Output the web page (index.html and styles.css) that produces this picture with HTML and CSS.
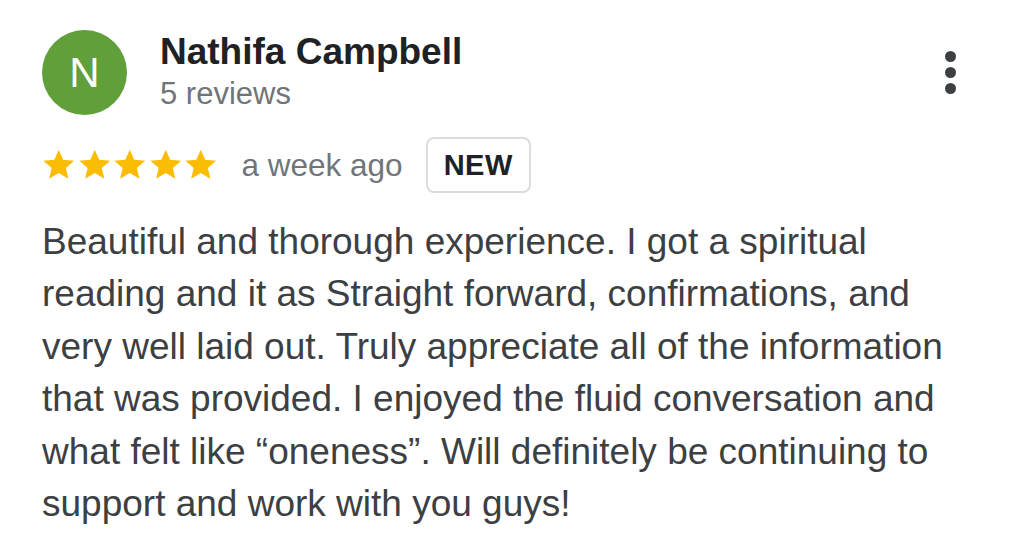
FILE: index.html
```html
<!DOCTYPE html>
<html>
<head>
<meta charset="utf-8">
<link rel="stylesheet" href="styles.css">
</head>
<body>
<div class="review">
  <div class="header">
    <div class="avatar">N</div>
    <div class="who">
      <div class="name">Nathifa Campbell</div>
      <div class="count">5 reviews</div>
    </div>
    <div class="more">
      <span class="dot"></span><span class="dot"></span><span class="dot"></span>
    </div>
  </div>
  <div class="meta">
    <div class="stars">
      <svg viewBox="0 0 24 24" class="star"><path d="M12 1.8l3 6.9 7.4.6-5.6 4.9 1.7 7.3L12 17.6l-6.5 3.9 1.7-7.3L1.6 9.3 9 8.7z"/></svg>
      <svg viewBox="0 0 24 24" class="star"><path d="M12 1.8l3 6.9 7.4.6-5.6 4.9 1.7 7.3L12 17.6l-6.5 3.9 1.7-7.3L1.6 9.3 9 8.7z"/></svg>
      <svg viewBox="0 0 24 24" class="star"><path d="M12 1.8l3 6.9 7.4.6-5.6 4.9 1.7 7.3L12 17.6l-6.5 3.9 1.7-7.3L1.6 9.3 9 8.7z"/></svg>
      <svg viewBox="0 0 24 24" class="star"><path d="M12 1.8l3 6.9 7.4.6-5.6 4.9 1.7 7.3L12 17.6l-6.5 3.9 1.7-7.3L1.6 9.3 9 8.7z"/></svg>
      <svg viewBox="0 0 24 24" class="star"><path d="M12 1.8l3 6.9 7.4.6-5.6 4.9 1.7 7.3L12 17.6l-6.5 3.9 1.7-7.3L1.6 9.3 9 8.7z"/></svg>
    </div>
    <span class="when">a week ago</span>
    <span class="badge">NEW</span>
  </div>
  <p class="text">Beautiful and thorough experience. I got a spiritual reading and it as Straight forward, confirmations, and very well laid out. Truly appreciate all of the information that was provided. I enjoyed the fluid conversation and what felt like “oneness”. Will definitely be continuing to support and work with you guys!</p>
</div>
</body>
</html>
```
FILE: styles.css
```css
html, body {
  margin: 0;
  background: #ffffff;
}
body {
  font-family: "Liberation Sans", Arial, sans-serif;
  width: 1024px;
  height: 554px;
  overflow: hidden;
}
.review {
  padding: 30px 0 0 42px;
}
.header {
  display: flex;
  align-items: flex-start;
  height: 85px;
}
.avatar {
  width: 85px;
  height: 85px;
  border-radius: 50%;
  background: #619f3b;
  color: #fff;
  font-size: 42px;
  line-height: 85px;
  text-align: center;
  flex: none;
}
.who {
  margin-left: 33px;
  margin-top: 2px;
}
.name {
  font-weight: bold;
  font-size: 37px;
  color: #202124;
  line-height: 40px;
}
.count {
  font-size: 31px;
  color: #70757a;
  line-height: 36px;
  margin-top: 4px;
}
.more {
  margin-left: auto;
  margin-right: 68px;
  margin-top: 21px;
  display: flex;
  flex-direction: column;
  gap: 5px;
}
.dot {
  width: 11px;
  height: 11px;
  border-radius: 50%;
  background: #3c4043;
}
.meta {
  display: flex;
  align-items: center;
  margin-top: 22px;
  margin-left: -1px;
}
.stars {
  display: flex;
}
.star {
  width: 35.5px;
  height: 35.5px;
  fill: #fbbc04;
  flex: none;
}
.when {
  font-size: 31.5px;
  color: #70757a;
  margin-left: 23px;
}
.badge {
  margin-left: 23px;
  border: 2px solid #dadce0;
  border-radius: 8px;
  padding: 9px 16px;
  font-size: 29px;
  line-height: 34px;
  font-weight: bold;
  color: #202124;
  letter-spacing: 0.5px;
}
.text {
  margin: 23px 0 0 0;
  width: 935px;
  font-size: 37px;
  line-height: 52.4px;
  color: #3c4043;
}
```
